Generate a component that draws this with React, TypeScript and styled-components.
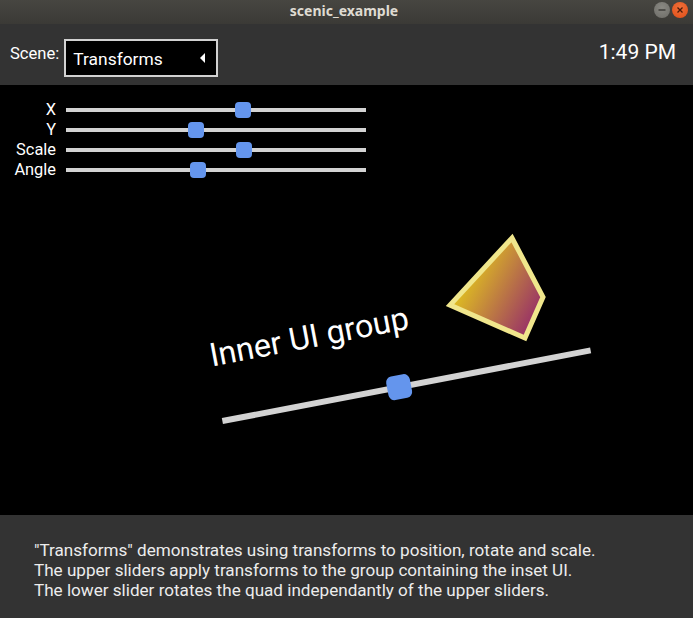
import React from "react";
import styled, { createGlobalStyle } from "styled-components";

const GlobalStyle = createGlobalStyle`
  html, body { margin: 0; padding: 0; background: #333333; }
  body {
    width: 693px;
    height: 618px;
    overflow: hidden;
    font-family: Roboto, "Noto Sans", sans-serif;
    -webkit-font-smoothing: antialiased;
  }
  * { box-sizing: border-box; }
`;

const Window = styled.div`
  width: 693px;
  height: 618px;
  display: flex;
  flex-direction: column;
`;

const TitleBar = styled.div`
  height: 24px;
  flex: none;
  display: grid;
  grid-template-columns: 1fr auto 1fr;
  align-items: center;
  background: linear-gradient(#474641, #3b3a36);
  padding-right: 5px;
`;

const TitleText = styled.div`
  grid-column: 2;
  color: #dfdbd2;
  font-family: "Noto Sans", "Open Sans", sans-serif;
  font-weight: 700;
  font-size: 14px;
  line-height: 18px;
  margin-top: -2px;
`;

const WindowButtons = styled.div`
  grid-column: 3;
  justify-self: end;
  align-self: start;
  margin-top: 2px;
  display: flex;
  gap: 2px;
`;

const CircleButton = styled.div<{ $tone: "close" | "min" }>`
  width: 16px;
  height: 16px;
  border-radius: 50%;
  display: flex;
  align-items: center;
  justify-content: center;
  background: ${(p) =>
    p.$tone === "close"
      ? "radial-gradient(circle at 50% 35%, #f0703a, #df4d17)"
      : "radial-gradient(circle at 50% 35%, #8a8983, #6d6c67)"};
`;

const Header = styled.header`
  height: 61px;
  flex: none;
  background: #333333;
  display: flex;
  align-items: flex-start;
  padding: 15px 17px 0 10px;
  color: #ffffff;
`;

const SceneLabel = styled.span`
  font-size: 16.6px;
  line-height: 20px;
  margin-top: 5px;
  margin-right: 5px;
`;

const Dropdown = styled.div`
  width: 154px;
  height: 38px;
  border: 2px solid #d2d2d2;
  background: #000000;
  display: flex;
  align-items: center;
  justify-content: space-between;
  padding: 2px 11px 0 7px;
  font-size: 17.4px;
  line-height: 22px;
  color: #ffffff;
`;

const Caret = styled.svg`
  width: 5px;
  height: 10px;
  margin-top: -3px;
  fill: #ffffff;
`;

const Clock = styled.span`
  margin-left: auto;
  font-size: 21px;
  line-height: 24px;
  margin-top: 1px;
`;

const Canvas = styled.main`
  position: relative;
  height: 430px;
  flex: none;
  background: #000000;
  overflow: hidden;
`;

const SliderPanel = styled.div`
  display: grid;
  grid-template-columns: 48px 300px;
  column-gap: 10px;
  grid-auto-rows: 20px;
  padding: 15px 0 0 8px;
  width: max-content;
`;

const SliderLabel = styled.span`
  align-self: center;
  text-align: right;
  color: #ffffff;
  font-size: 16.4px;
  line-height: 16px;
`;

const Slider = styled.div<{ $height: number }>`
  position: relative;
  height: ${(p) => p.$height}px;
  display: flex;
  align-items: center;
`;

const Track = styled.div`
  flex: 1;
  height: 4px;
  background: #d3d3d3;
`;

const Thumb = styled.div<{ $radius: number }>`
  position: absolute;
  top: 50%;
  width: 16px;
  height: 16px;
  margin-top: -8.5px;
  border-radius: ${(p) => p.$radius}px;
  background: #6495ed;
`;

const InnerGroup = styled.div`
  position: absolute;
  left: 0;
  top: 0;
  width: 250px;
  transform-origin: 0 0;
  transform: translate(222.5px, 336.8px) rotate(-10.86deg) scale(1.5)
    translate(0, -56.5px);
  display: flex;
  flex-direction: column;
  gap: 24px;
`;

const InnerTitle = styled.div`
  font-size: 21.6px;
  line-height: 24px;
  color: #ffffff;
  white-space: nowrap;
`;

const Quad = styled.svg`
  position: absolute;
  left: 439px;
  top: 142px;
  width: 115px;
  height: 122px;
  overflow: visible;
`;

const Footer = styled.footer`
  flex: 1;
  background: #333333;
  padding: 24.5px 34px 0;
  color: #ececec;
  font-size: 17.1px;
  line-height: 20px;
`;

const FooterLine = styled.div`
  white-space: nowrap;
`;

const upperSliders = [
  { label: "X", center: 177 },
  { label: "Y", center: 130 },
  { label: "Scale", center: 178 },
  { label: "Angle", center: 132 },
];

export default function App() {
  return (
    <>
      <GlobalStyle />
      <Window>
        <TitleBar>
          <TitleText>scenic_example</TitleText>
          <WindowButtons>
            <CircleButton $tone="min">
              <svg width="8" height="8" viewBox="0 0 8 8">
                <line x1="0.5" y1="4" x2="7.5" y2="4" stroke="#3a3935" strokeWidth="1.4" />
              </svg>
            </CircleButton>
            <CircleButton $tone="close">
              <svg width="8" height="8" viewBox="0 0 8 8">
                <path d="M1.5 1.5 L6.5 6.5 M6.5 1.5 L1.5 6.5" stroke="#4a1a08" strokeWidth="1.3" />
              </svg>
            </CircleButton>
          </WindowButtons>
        </TitleBar>

        <Header>
          <SceneLabel>Scene:</SceneLabel>
          <Dropdown>
            <span>Transforms</span>
            <Caret viewBox="0 0 5 10">
              <polygon points="5,0 5,10 0,5" />
            </Caret>
          </Dropdown>
          <Clock>1:49 PM</Clock>
        </Header>

        <Canvas>
          <SliderPanel>
            {upperSliders.map((s) => (
              <React.Fragment key={s.label}>
                <SliderLabel>{s.label}</SliderLabel>
                <Slider $height={20}>
                  <Track />
                  <Thumb $radius={4} style={{ left: s.center - 8 }} />
                </Slider>
              </React.Fragment>
            ))}
          </SliderPanel>

          <Quad viewBox="0 0 115 122">
            <defs>
              <linearGradient
                id="quadFill"
                gradientUnits="userSpaceOnUse"
                x1="-21"
                y1="60"
                x2="108"
                y2="130"
              >
                <stop offset="0" stopColor="#ffff00" />
                <stop offset="1" stopColor="#800080" />
              </linearGradient>
            </defs>
            <polygon
              points="73,11 104,70 86,111 11,78"
              fill="url(#quadFill)"
              stroke="#f0e68c"
              strokeWidth="5"
              strokeLinejoin="miter"
            />
          </Quad>

          <InnerGroup>
            <InnerTitle>Inner UI group</InnerTitle>
            <Slider $height={16}>
              <Track />
              <Thumb $radius={4} style={{ left: 111.5 }} />
            </Slider>
          </InnerGroup>
        </Canvas>

        <Footer>
          <FooterLine>"Transforms" demonstrates using transforms to position, rotate and scale.</FooterLine>
          <FooterLine>The upper sliders apply transforms to the group containing the inset UI.</FooterLine>
          <FooterLine>The lower slider rotates the quad independantly of the upper sliders.</FooterLine>
        </Footer>
      </Window>
    </>
  );
}
